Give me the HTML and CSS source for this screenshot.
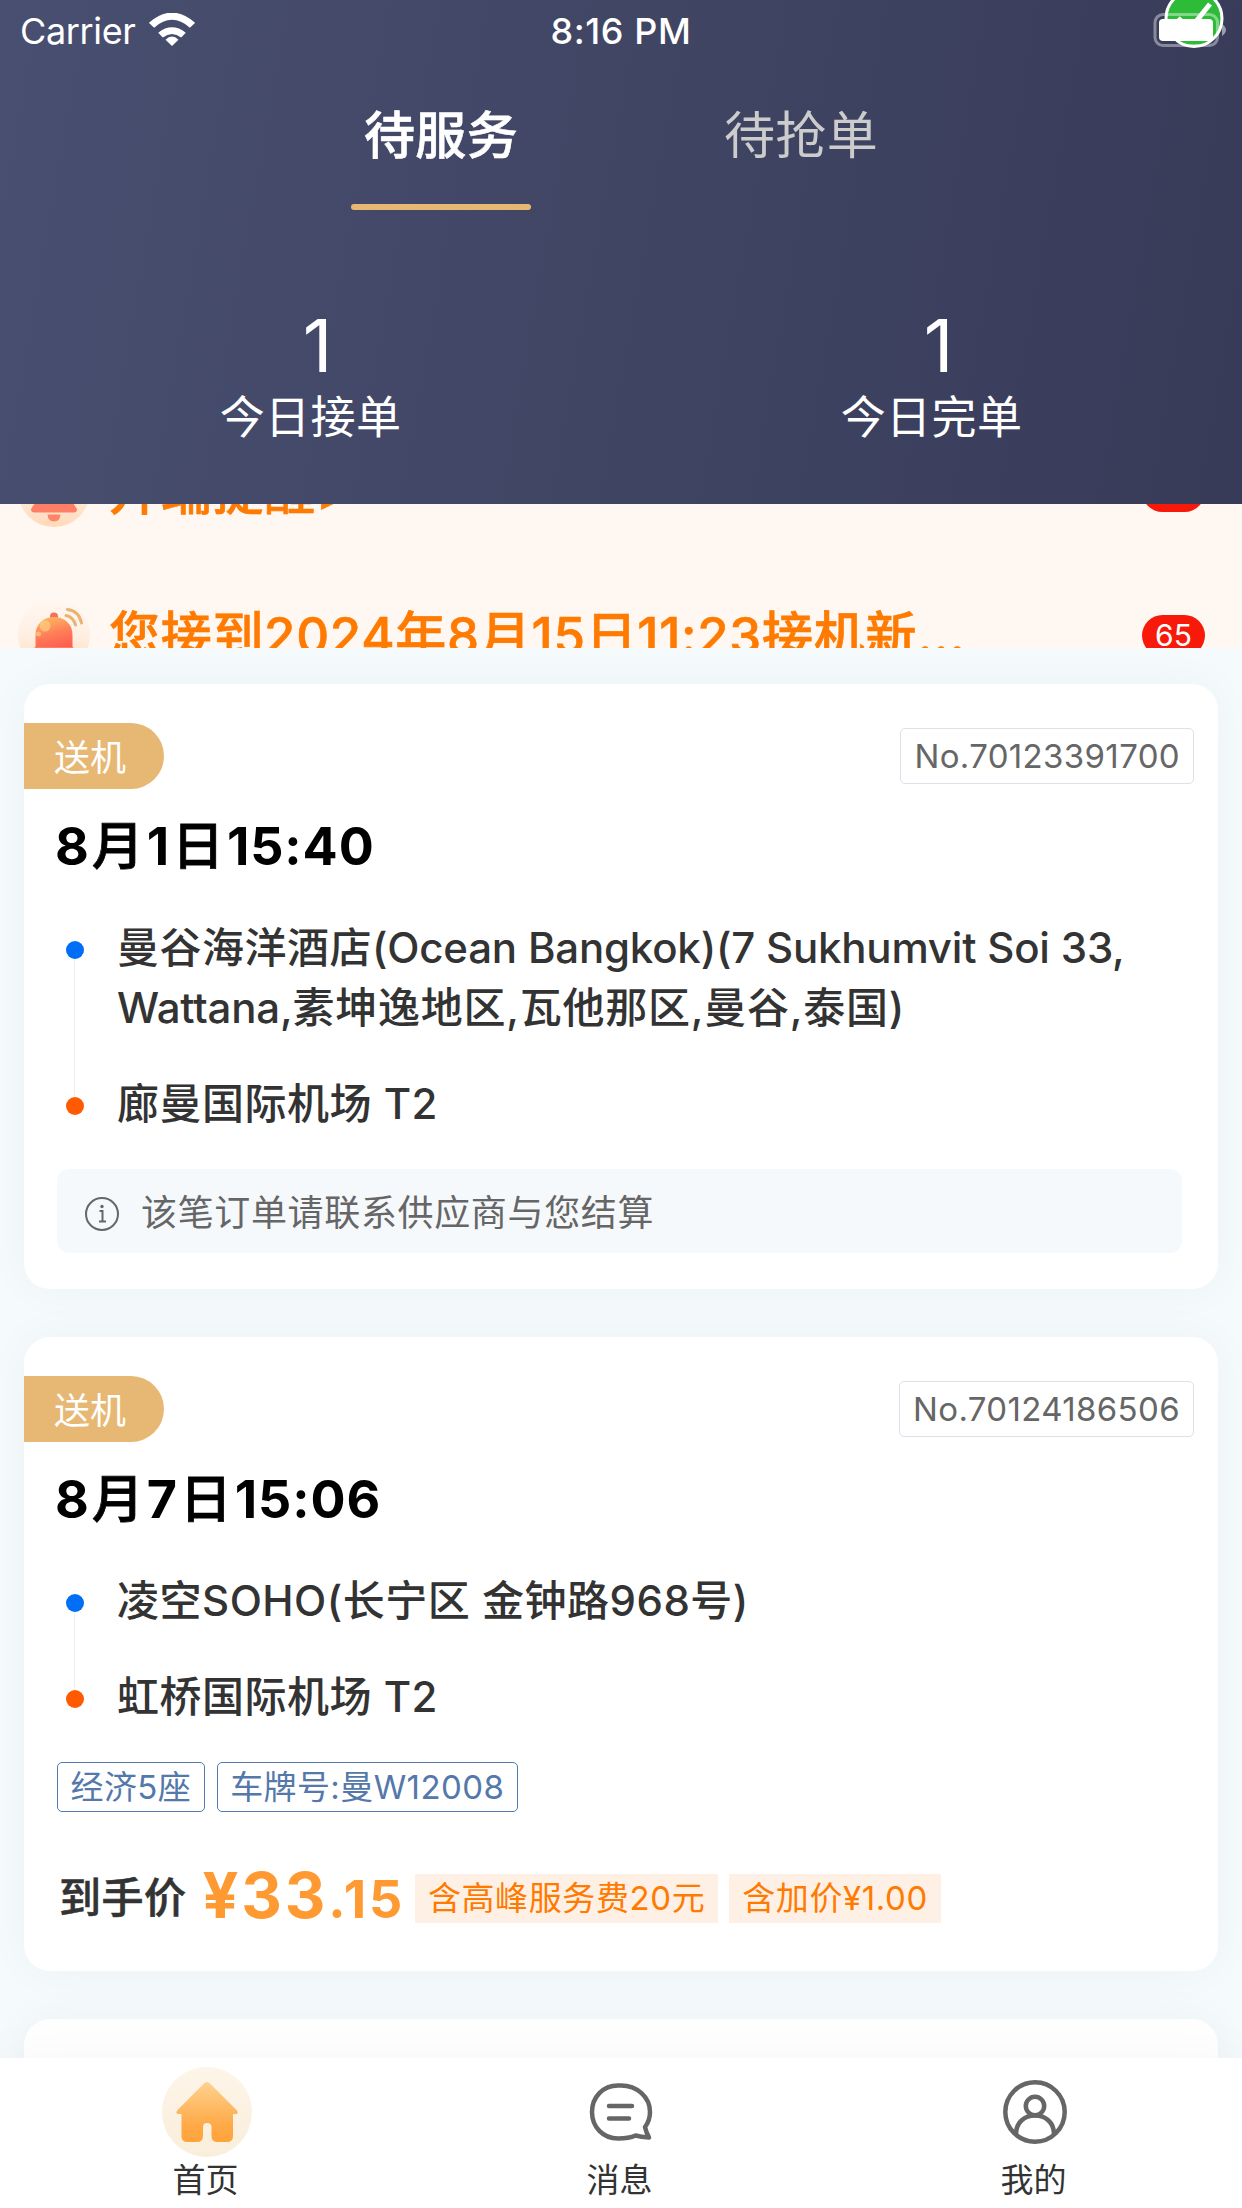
FILE: index.html
```html
<!DOCTYPE html>
<html lang="zh-CN">
<head>
<meta charset="utf-8">
<title>待服务</title>
<link rel="stylesheet" href="styles.css">
</head>
<body>
<div class="app">
  <header class="header">
    <div class="status">
      <div class="carrier">
        <span>Carrier</span>
        <svg class="wifi" width="46" height="33" viewBox="0 3 46 36.500" preserveAspectRatio="none" fill="#fff">
          <path d="M23 39.500 L16.500 32.500 Q23 25.500 29.500 32.500 Z"/>
          <path d="M11.500 27.500 Q23 17.500 34.500 27.500" fill="none" stroke="#fff" stroke-width="7"/>
          <path d="M2.500 16.500 Q23 -3.500 43.500 16.500" fill="none" stroke="#fff" stroke-width="7.500"/>
        </svg>
      </div>
      <div class="clock">8:16 PM</div>
      <svg class="battery" width="76" height="60" viewBox="0 0 76 60">
        <circle cx="41" cy="18.500" r="28" fill="#2dbb38" stroke="#fff" stroke-width="3"/>
        <path d="M25 18 L37 29 L57 4" fill="none" stroke="#fff" stroke-width="5"/>
        <rect x="2" y="14.500" width="62.500" height="31" rx="8" fill="none" stroke="#fff" stroke-opacity=".4" stroke-width="3"/>
        <rect x="6" y="19" width="54" height="22" rx="4" fill="#fff"/>
        <path d="M69 24 Q77 30 69 36 Z" fill="#fff" fill-opacity=".5"/>
      </svg>
    </div>
    <nav class="tabs">
      <div class="tab active">待服务</div>
      <div class="tab">待抢单</div>
    </nav>
    <div class="stats">
      <div class="stat"><b>1</b><span>今日接单</span></div>
      <div class="stat"><b>1</b><span>今日完单</span></div>
    </div>
  </header>

  <section class="notices">
    <div class="notice">
      <svg class="bell" width="72" height="72"><use href="#bell"/></svg>
      <span class="notice-text">升端提醒&gt;</span>
      <span class="count">65</span>
    </div>
    <div class="notice">
      <svg class="bell" width="72" height="72"><use href="#bell"/></svg>
      <span class="notice-text">您接到2024年8月15日11:23接机新...</span>
      <span class="count">65</span>
    </div>
  </section>

  <main class="orders">
    <article class="card">
      <div class="card-top"><span class="type">送机</span><span class="number">No.70123391700</span></div>
      <h2>8<em>月</em>1<em>日</em>15:40</h2>
      <div class="route">
        <div class="stop from">曼谷海洋酒店<span class="latin">(Ocean Bangkok)(7 Sukhumvit Soi 33,</span><br><span class="latin">Wattana,</span><span class="area">素坤逸地区,瓦他那区,曼谷,泰国)</span></div>
        <div class="stop to">廊曼国际机场 T2</div>
      </div>
      <div class="hint">
        <svg width="36" height="36" viewBox="0 0 36 36" fill="none" stroke="#666" stroke-width="2">
          <circle cx="18" cy="18" r="16"/>
          <path d="M15.500 15 H18.500 V25.500 M15 25.500 H22"/>
          <circle cx="18" cy="10.500" r="1.700" fill="#666" stroke="none"/>
        </svg>
        <span>该笔订单请联系供应商与您结算</span>
      </div>
    </article>

    <article class="card">
      <div class="card-top"><span class="type">送机</span><span class="number">No.70124186506</span></div>
      <h2>8<em>月</em>7<em>日</em>15:06</h2>
      <div class="route">
        <div class="stop from">凌空SOHO(长宁区 金钟路968号)</div>
        <div class="stop to">虹桥国际机场 T2</div>
      </div>
      <div class="chips"><span class="chip">经济5座</span><span class="chip">车牌号:曼W12008</span></div>
      <div class="price">
        <span class="price-label">到手价</span>
        <span class="amount">¥33<small>.15</small></span>
        <span class="fee">含高峰服务费20元</span>
        <span class="fee">含加价¥1.00</span>
      </div>
    </article>

    <article class="card"></article>
  </main>

  <footer class="tabbar">
    <div class="item">
      <svg width="90" height="90" viewBox="0 0 90 90">
        <circle cx="45" cy="45" r="45" fill="url(#halo)"/>
        <path d="M42 16.500 Q45 13.500 48 16.500 L74.500 43 Q77 46 74.500 47 H71 V69 Q71 75 65 75 H55.500 Q49.500 75 49.500 69 V60 Q49.500 56 45 56 Q41 56 41 60 V69 Q41 75 35 75 H25.500 Q19.500 75 19.500 69 V47 H16 Q13 46 15.500 43 Z" fill="url(#house)"/>
      </svg>
      <span>首页</span>
    </div>
    <div class="item">
      <svg width="90" height="90" viewBox="0 0 90 90" fill="none" stroke="#666" stroke-width="4.500" stroke-linecap="round" stroke-linejoin="round">
        <path d="M45 18.500 C61 18.500 74 30 74 45 C74 51 72 56 69 60 Q70 65 73 70.500 Q65 70 59.500 68.500 Q53 71.500 42 71.500 C27 71.500 16 60 16 45 C16 30 27 18.500 42 18.500 Z"/>
        <path d="M33 39 H56 M33 51.500 H53"/>
      </svg>
      <span>消息</span>
    </div>
    <div class="item">
      <svg width="90" height="90" viewBox="0 0 90 90" fill="none" stroke="#666" stroke-width="4.500">
        <circle cx="45" cy="45" r="29.700"/>
        <circle cx="45" cy="39" r="9.200"/>
        <path d="M26 67 C26 55 35 48.500 45 48.500 C55 48.500 64 55 64 67"/>
      </svg>
      <span>我的</span>
    </div>
  </footer>
</div>

<svg class="defs" width="0" height="0">
  <defs>
    <linearGradient id="halo" x1="0" y1="0" x2="0" y2="1"><stop offset="0" stop-color="#fdf5e9"/><stop offset="1" stop-color="#faeedb"/></linearGradient>
    <linearGradient id="house" x1="0" y1="0" x2="0" y2="1"><stop offset="0" stop-color="#ffd18f"/><stop offset=".75" stop-color="#ffa845"/><stop offset="1" stop-color="#ffa43c"/></linearGradient>
    <linearGradient id="bell-halo" x1="0" y1="0" x2="0" y2="1"><stop offset="0" stop-color="#fff7f1"/><stop offset=".5" stop-color="#ffefe2"/><stop offset="1" stop-color="#ffd9b8"/></linearGradient>
    <linearGradient id="bell-body" x1=".3" y1="0" x2=".6" y2="1"><stop offset="0" stop-color="#fcb85f"/><stop offset=".5" stop-color="#ff8058"/><stop offset="1" stop-color="#ff5c50"/></linearGradient>
    <symbol id="bell" viewBox="0 0 72 72">
      <circle cx="36" cy="36" r="36" fill="url(#bell-halo)"/>
      <circle cx="36" cy="17.500" r="4" fill="#f5705a"/>
      <path d="M17.500 50 V36 C17.500 25 25.500 18 36 18 C46.500 18 54.500 25 54.500 36 V50 Z" fill="url(#bell-body)"/>
      <circle cx="27" cy="27" r="5.500" fill="#ffd58c" fill-opacity=".6"/>
      <circle cx="20.500" cy="35" r="2.500" fill="#ffd58c" fill-opacity=".6"/>
      <path d="M17 48 H55 L59 54 Q59 57.500 56 57.500 H16 Q13 57.500 13 54 Z" fill="#ff7f66"/>
      <path d="M29.500 59.500 H42.500 Q42 66.500 36 66.500 Q30 66.500 29.500 59.500 Z" fill="#ff8468"/>
      <path d="M48 16.500 Q55.500 18 57.500 26 M49.500 10.500 Q61 12 63.500 24" fill="none" stroke="#e8b375" stroke-width="3" stroke-linecap="round"/>
    </symbol>
  </defs>
</svg>
</body>
</html>
```
FILE: styles.css
```css
* { box-sizing: border-box; }
body { margin: 0; font-family: Inter, "Noto Sans CJK SC", sans-serif; color: #333; }
.app { width: 1242px; height: 2208px; display: flex; flex-direction: column; overflow: hidden; background: #f5fafd; }
.defs { display: block; }
svg { display: block; flex: none; }

.header { flex: none; height: 504px; background: linear-gradient(100deg, #494f70, #373b58); color: #fff; display: flex; flex-direction: column; }
.status { height: 60px; display: grid; grid-template-columns: 1fr auto 1fr; font-size: 36px; line-height: 63px; }
.carrier { display: flex; gap: 13px; padding-left: 20px; letter-spacing: -.35px; }
.wifi { margin-top: 13px; }
.clock { font-weight: 500; letter-spacing: .6px; }
.battery { justify-self: end; margin-right: 13px; }

.tabs { display: flex; justify-content: center; height: 150px; }
.tab { width: 180px; margin: 0 90px; height: 150px; text-align: center; font-size: 51px; line-height: 151px; color: #ccc; letter-spacing: .3px; }
.tab.active { color: #fff; font-weight: 500; -webkit-text-stroke: .6px #fff; }
.tab.active::after { content: ""; display: block; height: 6px; margin-top: -7px; border-radius: 3px; background: #e7b873; }

.stats { display: grid; grid-template-columns: 1fr 1fr; padding-top: 96px; }
.stat { display: flex; flex-direction: column; align-items: center; }
.stat b { font-size: 73px; font-weight: 400; line-height: 80px; padding-left: 14px; }
.stat span { font-size: 45px; line-height: 64px; letter-spacing: .4px; }

.notices { flex: none; height: 144px; overflow: hidden; background: #fff7f1; display: flex; flex-direction: column; }
.notice { flex: none; height: 144px; display: flex; align-items: center; padding: 0 37px 0 18px; }
.notice:first-child { margin-top: -85px; }
.notice-text { flex: 1; margin-left: 19px; padding-bottom: 7px; font-size: 51px; font-weight: 500; color: #ff7a00; white-space: nowrap; letter-spacing: .7px; -webkit-text-stroke: .6px #ff7a00; }
.count { width: 63px; height: 41px; border-radius: 21px; background: #f71a0b; color: #fff; font-size: 30px; line-height: 41px; text-align: center; }

.orders { flex: 1; min-height: 0; overflow: hidden; padding: 36px 24px 0; display: flex; flex-direction: column; gap: 48px; }
.card { flex: none; background: #fff; border-radius: 26px; padding-top: 39px; box-shadow: 0 0 45px rgba(30, 30, 60, .04); height: 605px; }
.card + .card { height: 634px; }
.card-top { display: flex; justify-content: space-between; align-items: center; height: 66px; padding-right: 24px; }
.type { width: 140px; height: 66px; padding-left: 30px; border-radius: 0 33px 33px 0; background: #e7b873; color: #fff; font-size: 36px; line-height: 71px; }
.number { height: 56px; padding: 0 13px; border: 1px solid #dce1ea; border-radius: 5px; color: #666; font-size: 33px; line-height: 54px; letter-spacing: .35px; }
h2 { margin: 21px 0 0 31px; font-size: 52px; font-weight: 700; line-height: 74px; color: #000; letter-spacing: .9px; }
h2 em { font-style: normal; font-weight: 500; margin: 0 2px; -webkit-text-stroke: .8px #000; }
.route { position: relative; margin: 34px 0 0 93px; display: flex; flex-direction: column; gap: 36px; font-size: 42px; font-weight: 500; line-height: 60px; white-space: nowrap; letter-spacing: .5px; }
.latin { letter-spacing: -.2px; }
.area { letter-spacing: .75px; }
.route::before { content: ""; position: absolute; left: -43px; top: 40px; bottom: 38px; width: 1px; background: #eee; }
.stop { position: relative; }
.stop::before { content: ""; position: absolute; left: -51px; top: 23px; width: 18px; height: 18px; border-radius: 50%; background: #006ff6; }
.stop.to::before { background: #ff5a00; }
.hint { display: flex; align-items: center; margin: 35px 36px 0 33px; height: 84px; padding-left: 27px; border-radius: 12px; background: #f5f9fc; color: #666; font-size: 36px; gap: 21px; letter-spacing: .65px; }
.hint svg { margin-top: 5px; }
.hint span { padding-bottom: 3px; }
.chips { display: flex; gap: 12px; margin: 35px 0 0 33px; }
.chip { height: 50px; padding: 0 12.500px; border: 1.500px solid #557aae; border-radius: 5px; color: #5578ab; font-size: 33px; line-height: 48px; letter-spacing: .4px; }
.price { display: flex; align-items: center; margin: 50px 0 0 35px; height: 72px; }
.price-label { padding-bottom: 7px; font-size: 42px; font-weight: 500; letter-spacing: .5px; -webkit-text-stroke: .6px #333; }
.amount { margin: 0 10px 0 16px; padding-bottom: 2px; font-size: 63px; font-weight: 700; color: #ff9a33; line-height: 72px; letter-spacing: 2.8px; }
.amount small { font-size: 52px; }
.fee { height: 49px; padding: 0 13px; margin-right: 11px; background: #fff0e5; color: #ff7a00; font-size: 33px; line-height: 49px; white-space: nowrap; letter-spacing: .6px; }

.tabbar { position: relative; flex: none; height: 150px; background: #fff; display: grid; grid-template-columns: repeat(3, 1fr); box-shadow: 0 0 60px rgba(0, 0, 0, .04); padding-top: 9px; }
.item { display: flex; flex-direction: column; align-items: center; font-size: 33px; line-height: 47px; }
.item span { margin-right: 3px; }
```
